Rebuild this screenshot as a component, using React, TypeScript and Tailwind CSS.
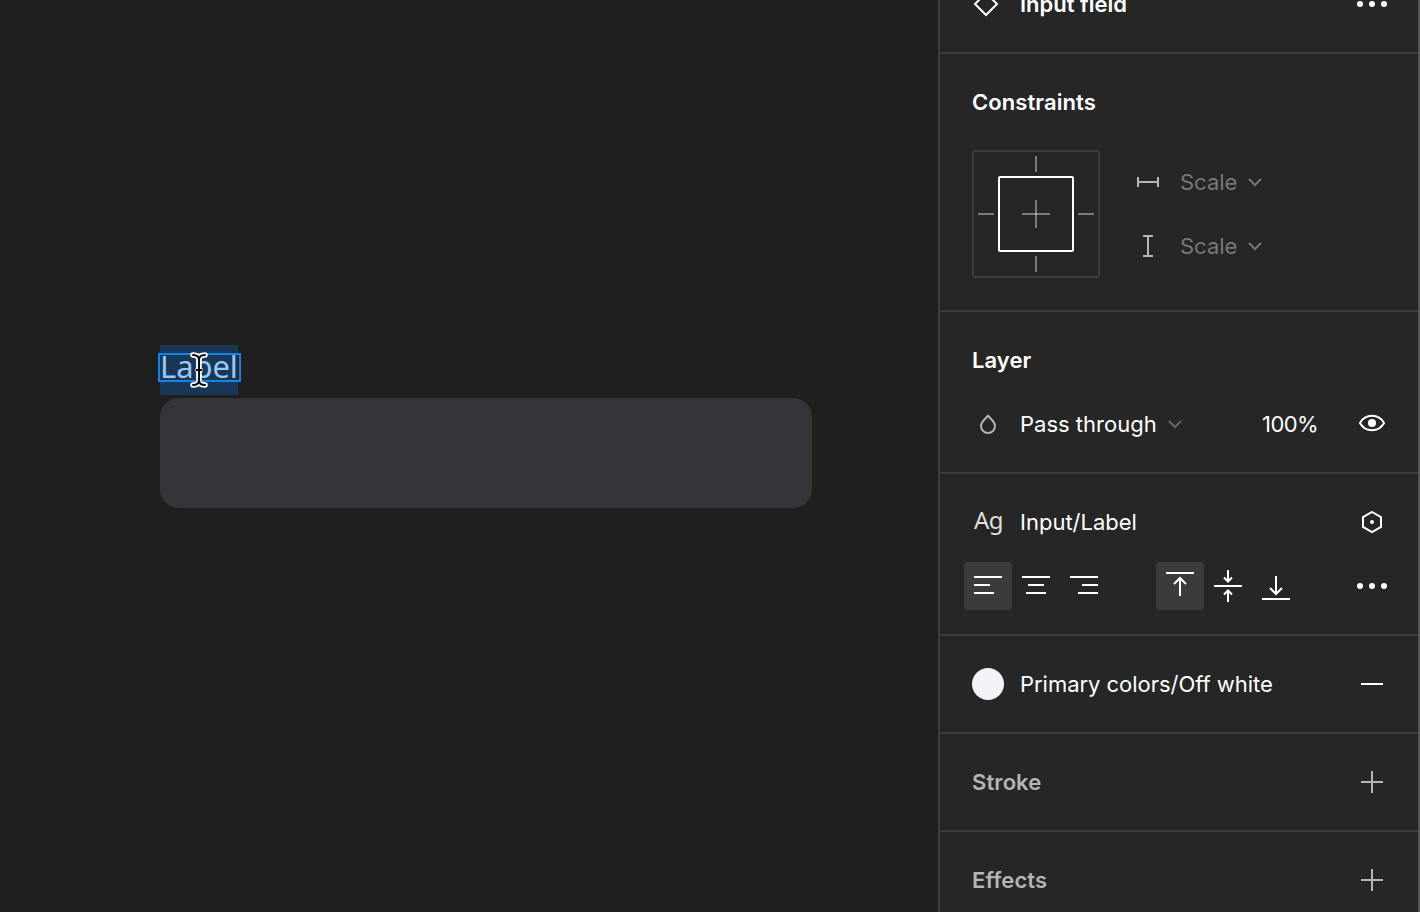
import React from "react";

type Children = { children: React.ReactNode };

function Glyph({ children, className = "" }: Children & { className?: string }) {
  return (
    <svg
      viewBox="0 0 48 48"
      className={`h-12 w-12 shrink-0 ${className}`}
      fill="none"
      stroke="currentColor"
      strokeWidth="2"
    >
      {children}
    </svg>
  );
}

function Chevron({ className }: { className: string }) {
  return (
    <svg viewBox="0 0 16 10" className={`h-[10px] w-4 shrink-0 ${className}`} fill="none" stroke="currentColor" strokeWidth="2">
      <path d="M2 2l6 6 6-6" />
    </svg>
  );
}

function Dots() {
  return (
    <Glyph>
      <g fill="currentColor" stroke="none">
        <circle cx="12" cy="24" r="3" />
        <circle cx="24" cy="24" r="3" />
        <circle cx="36" cy="24" r="3" />
      </g>
    </Glyph>
  );
}

function Plus() {
  return (
    <Glyph className="text-[#b5b5b5]">
      <path d="M13 24h22M24 13v22" />
    </Glyph>
  );
}

function Section({ children, className = "" }: Children & { className?: string }) {
  return <section className={`shrink-0 border-b-2 border-[#3b3b3b] ${className}`}>{children}</section>;
}

function Title({ children }: Children) {
  return <h2 className="flex h-24 items-center pl-8 font-semibold tracking-[0.08px]">{children}</h2>;
}

function ConstraintBox() {
  return (
    <div className="h-32 w-32 rounded-[3px] border-2 border-[#3b3b3b]">
      <svg viewBox="2 2 124 124" className="h-full w-full" fill="none" strokeWidth="2">
        <rect x="27" y="27" width="74" height="74" rx="1" stroke="#fff" />
        <path
          d="M64 6v16M64 106v16M6 64h16M106 64h16M50 64h28M64 50v28"
          stroke="#7b7b7b"
        />
        <rect x="63" y="63" width="2" height="2" fill="#a8a8a8" />
      </svg>
    </div>
  );
}

const beam = "M5 4c3.500 0 6 1.500 6 5v20c0 3.500-2.500 5-6 5M17 4c-3.500 0-6 1.500-6 5M11 29c0 3.500 2.500 5 6 5";

function Canvas() {
  return (
    <main className="w-[938px] shrink-0 bg-[#1f1f1f] pl-40 pt-[345px]">
      <div className="relative h-[50px] w-[78px] bg-[#193857] font-['Noto_Sans','Open_Sans',sans-serif] text-[31px] leading-[42px] text-[#97c9f4]">
        <span className="block whitespace-nowrap tracking-[-0.1px]">Label</span>
        <div className="absolute -left-[2px] top-[8px] h-[29px] w-[83px] border-2 border-[#1783e4]" />
        <svg viewBox="0 0 22 40" className="absolute left-[28px] top-[6px] h-10 w-[22px]" fill="none" strokeLinecap="round">
          <path d={beam} stroke="#fff" strokeWidth="5.5" />
          <path d="M9 19h4" stroke="#fff" strokeWidth="4" />
          <path d={beam} stroke="#0b0b0b" strokeWidth="2" />
          <path d="M8.500 19h5" stroke="#0b0b0b" strokeWidth="2" />
        </svg>
      </div>
      <div className="mt-[3px] h-[110px] w-[652px] rounded-[19px] bg-[#353439]" />
    </main>
  );
}

export default function App() {
  return (
    <div className="flex h-[912px] w-[1420px] overflow-hidden bg-[#1f1f1f]">
      <Canvas />
      <aside className="flex h-[912px] w-[482px] shrink-0 flex-col overflow-hidden border-l-2 border-r-2 border-l-[#3b3b3b] border-r-[#535353] bg-[#262626] font-[Inter,sans-serif] text-[22px] leading-8 text-white">
        <Section className="-mt-11 flex h-[98px] items-center pl-[22px] pr-[22px]">
          <Glyph>
            <path d="M24 13l11 11-11 11-11-11z" />
          </Glyph>
          <span className="ml-[10px] flex-1 font-semibold">Input field</span>
          <Dots />
        </Section>

        <Section className="h-[258px]">
          <Title>Constraints</Title>
          <div className="flex pl-8">
            <ConstraintBox />
            <div className="ml-6 flex flex-col gap-4 pt-2 text-[#777777]">
              <div className="flex items-center">
                <Glyph className="text-[#b5b5b5]">
                  <path d="M14 24h20M14 19v10M34 19v10" />
                </Glyph>
                <span className="ml-2">Scale</span>
                <Chevron className="ml-[10px]" />
              </div>
              <div className="flex items-center">
                <Glyph className="text-[#b5b5b5]">
                  <path d="M24 14v20M19 14h10M19 34h10" />
                </Glyph>
                <span className="ml-2">Scale</span>
                <Chevron className="ml-[10px]" />
              </div>
            </div>
          </div>
        </Section>

        <Section className="h-[162px]">
          <Title>Layer</Title>
          <div className="flex h-8 items-center pl-6 pr-[22px]">
            <Glyph className="text-[#b5b5b5]">
              <path d="M24 15.800c-2.500 2.700-7 6-7 10.200a7 7 0 0 0 14 0c0-4.200-4.500-7.500-7-10.200z" />
            </Glyph>
            <span className="ml-2">Pass through</span>
            <Chevron className="ml-[10px] text-[#666666]" />
            <span className="ml-auto mr-[30px] tracking-[-0.6px]">100%</span>
            <Glyph>
              <path d="M12 23c2.500-4.700 6.700-7.200 12-7.200s9.500 2.500 12 7.200c-2.500 4.700-6.700 7.200-12 7.200s-9.500-2.500-12-7.200z" />
              <circle cx="24" cy="23" r="4" fill="currentColor" stroke="none" />
            </Glyph>
          </div>
        </Section>

        <Section className="flex h-[162px] flex-col gap-6 pt-8">
          <div className="flex h-8 items-center pl-[34px] pr-[22px]">
            <span className="mb-1 w-[46px] font-['Noto_Sans',sans-serif] text-2xl tracking-[-0.5px] text-[#dedede]">Ag</span>
            <span className="flex-1">Input/Label</span>
            <Glyph>
              <path d="M24 14l9 5.100v9.800L24 34l-9-5.100v-9.800z" />
              <circle cx="24" cy="24" r="2" fill="currentColor" stroke="none" />
            </Glyph>
          </div>
          <div className="flex h-12 items-center pl-6 pr-[22px]">
            <Glyph className="rounded-[4px] bg-[#3b3b3b]">
              <path d="M10 15h28M10 23h16M10 31h20" />
            </Glyph>
            <Glyph>
              <path d="M10 15h28M16 23h16M14 31h20" />
            </Glyph>
            <Glyph>
              <path d="M10 15h28M22 23h16M18 31h20" />
            </Glyph>
            <Glyph className="ml-12 rounded-[4px] bg-[#3b3b3b]">
              <path d="M10 11h28M24 34V16M18 22l6-6 6 6" />
            </Glyph>
            <Glyph>
              <path d="M10 24h28M24 8v11M20 15.500l4 4 4-4M24 40V29M20 32.500l4-4 4 4" />
            </Glyph>
            <Glyph>
              <path d="M10 37h28M24 14v18M18 26l6 6 6-6" />
            </Glyph>
            <div className="ml-auto flex">
              <Dots />
            </div>
          </div>
        </Section>

        <Section className="flex h-[98px] items-center pl-8 pr-[22px]">
          <span className="h-8 w-8 rounded-full bg-[#f3f2f8]" />
          <span className="ml-4 flex-1 tracking-[-0.03px]">Primary colors/Off white</span>
          <Glyph>
            <path d="M13 24h22" />
          </Glyph>
        </Section>

        <Section className="flex h-[98px] items-center justify-between pl-8 pr-[22px]">
          <span className="font-semibold tracking-[0.1px] text-[#b5b5b5]">Stroke</span>
          <Plus />
        </Section>

        <Section className="flex h-[98px] items-center justify-between pl-8 pr-[22px]">
          <span className="font-semibold tracking-[0.1px] text-[#b5b5b5]">Effects</span>
          <Plus />
        </Section>
      </aside>
    </div>
  );
}
